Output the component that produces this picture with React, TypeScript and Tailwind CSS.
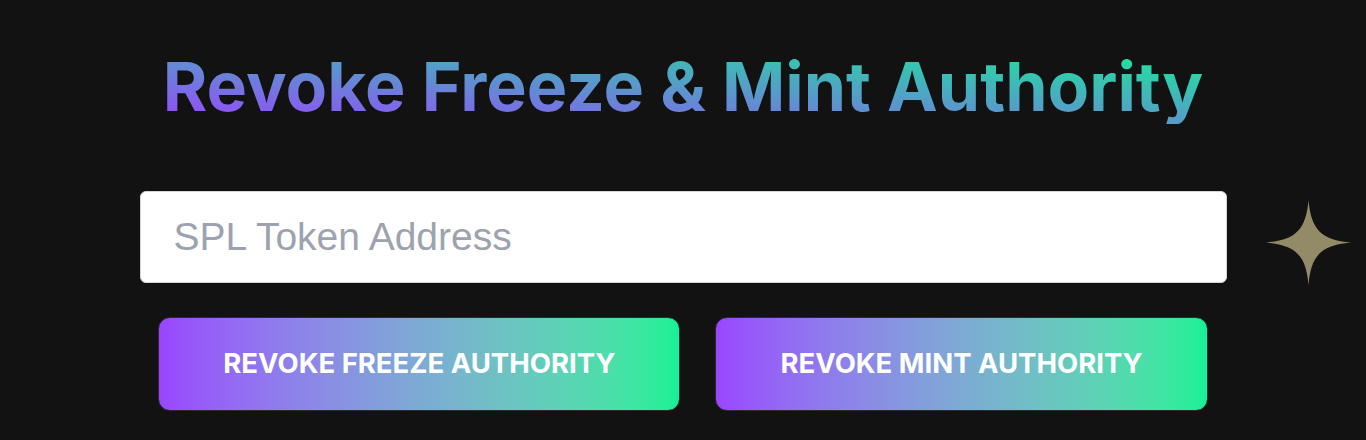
import React from 'react';

function Sparkle() {
  return (
    <svg
      className="absolute left-[1266px] top-[200px]"
      width="85"
      height="85"
      viewBox="0 0 100 100"
      fill="#938b67"
    >
      <path d="M50 0 C53 35 65 47 100 50 C65 53 53 65 50 100 C47 65 35 53 0 50 C35 47 47 35 50 0 Z" />
    </svg>
  );
}

export default function App() {
  return (
    <div className="relative h-[440px] w-full overflow-hidden bg-[#121212] font-['Inter',sans-serif]">
      <Sparkle />
      <div className="flex flex-col items-center pt-[48px]">
        <h1 className="bg-linear-to-tr/srgb from-[#9945FF] to-[#14F195] bg-clip-text text-[68px] font-bold leading-[76px] text-transparent">
          Revoke Freeze &amp; Mint Authority
        </h1>

        <input
          type="text"
          placeholder="SPL Token Address"
          className="mt-[67px] h-[92px] w-[1087px] rounded-md border border-[#d1d5db] bg-white px-[33px] font-['Liberation_Sans',Arial,sans-serif] text-[39px] text-gray-800 outline-none placeholder:text-[#9ca3af]"
        />

        <div className="mt-[34px] flex gap-[35px]">
          <button className="h-[94px] rounded-xl border border-[#2a2a2a] bg-gradient-to-r from-[#9945FF] to-[#14F195] px-16 text-[27.5px] font-bold uppercase text-white">
            Revoke Freeze Authority
          </button>
          <button className="h-[94px] rounded-xl border border-[#2a2a2a] bg-gradient-to-r from-[#9945FF] to-[#14F195] px-16 text-[27.5px] font-bold uppercase text-white">
            Revoke Mint Authority
          </button>
        </div>
      </div>
    </div>
  );
}
